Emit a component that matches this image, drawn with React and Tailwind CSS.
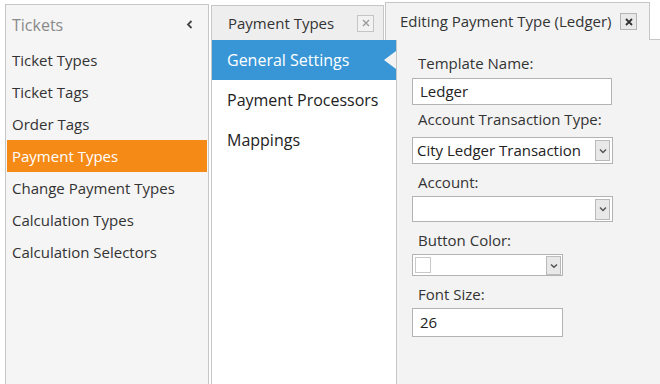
import { useState } from 'react'

const menu = [
  'Ticket Types',
  'Ticket Tags',
  'Order Tags',
  'Payment Types',
  'Change Payment Types',
  'Calculation Types',
  'Calculation Selectors',
]

const sections = ['General Settings', 'Payment Processors', 'Mappings']

function CloseBox({ dark }) {
  return (
    <span className={`flex items-center justify-center w-[17px] h-[17px] border ${dark ? 'border-[#b5b5b5] bg-[#e9e9e9] text-[#333]' : 'border-[#c4c4c4] bg-[#f2f2f2] text-[#9a9a9a]'}`}>
      <svg width="8" height="8" viewBox="0 0 8 8">
        <path d="M1 1L7 7M7 1L1 7" stroke="currentColor" strokeWidth={dark ? 1.8 : 1.4} />
      </svg>
    </span>
  )
}

function Arrow() {
  return (
    <span className="flex items-center justify-center w-[15px] h-[21px] border border-[#b9b9b9] bg-[#e8e8e8] text-[#555]">
      <svg width="8" height="6" viewBox="0 0 8 6">
        <path d="M1 1.5L4 4.5L7 1.5" fill="none" stroke="currentColor" strokeWidth="1.5" />
      </svg>
    </span>
  )
}

function Label({ children, className = '' }) {
  return <div className={`pl-[6px] h-[20px] leading-[20px] text-[15px] text-[#333] ${className}`}>{children}</div>
}

export default function App() {
  const [active, setActive] = useState('Payment Types')
  const [section, setSection] = useState('General Settings')

  return (
    <div className="flex w-[660px] h-[384px] overflow-hidden bg-white text-[#222]" style={{ fontFamily: '"Segoe UI", "Open Sans", sans-serif' }}>
      {/* left navigation */}
      <div className="ml-[5px] mt-[4px] w-[204px] flex flex-col border border-b-0 border-[#c6c6c6] bg-[#f5f5f5] px-[1px]">
        <div className="h-[39px] flex items-center justify-between pl-[5px] pr-[14px] text-[16px] text-[#8a8a8a]">
          <span>Tickets</span>
          <svg width="7" height="9" viewBox="0 0 7 9" className="text-[#444]">
            <path d="M5.5 1L2 4.5L5.5 8" fill="none" stroke="currentColor" strokeWidth="1.8" />
          </svg>
        </div>
        {menu.map(m => (
          <button
            key={m}
            onClick={() => setActive(m)}
            className={`h-[32px] pl-[5px] text-left text-[15px] ${active === m ? 'bg-[#f68a17] text-white' : 'text-[#333]'}`}
          >
            {m}
          </button>
        ))}
      </div>

      {/* document area */}
      <div className="ml-[2px] flex-1 flex flex-col">
        <div className="h-[40px] flex">
          <div className="mt-[5px] w-[173px] h-[35px] flex items-center pl-[16px] pr-[9px] border border-b-0 border-[#c6c6c6] bg-[#eeeeee] text-[15px] text-[#333]">
            <span>Payment Types</span>
            <span className="ml-auto"><CloseBox /></span>
          </div>
          <div className="ml-[1px] mt-[2px] w-[265px] h-[38px] flex items-center pl-[14px] pr-[12px] border border-b-0 border-[#c6c6c6] bg-[#f3f3f3] text-[15px] text-[#333]">
            <span>Editing Payment Type (Ledger)</span>
            <span className="ml-auto"><CloseBox dark /></span>
          </div>
          <div className="flex-1 border-b border-[#c6c6c6]" />
        </div>

        <div className="flex-1 flex">
          <div className="w-[186px] flex flex-col border-x border-[#c6c6c6] bg-white">
            {sections.map(s => (
              <button
                key={s}
                onClick={() => setSection(s)}
                className={`relative h-[40px] pl-[15px] text-left text-[16px] ${section === s ? 'bg-[#3896d6] text-white' : 'text-[#222]'}`}
              >
                {s}
                {section === s && (
                  <span className="absolute right-0 top-[11px] w-0 h-0 border-y-[9px] border-y-transparent border-r-[12px] border-r-[#f3f3f3]" />
                )}
              </button>
            ))}
          </div>

          <div className="flex-1 flex flex-col bg-[#f3f3f3] pl-[15px]">
            <Label className="mt-[13px]">Template Name:</Label>
            <div className="mt-[5px] w-[200px] h-[27px] flex items-center pl-[7px] border border-[#b3b3b3] bg-white text-[15px]">Ledger</div>

            <Label className="mt-[4px]">Account Transaction Type:</Label>
            <div className="mt-[8px] w-[201px] h-[27px] flex items-center justify-between pl-[4px] pr-[2px] border border-[#b3b3b3] bg-white text-[15px]">
              <span>City Ledger Transaction</span>
              <Arrow />
            </div>

            <Label className="mt-[8px]">Account:</Label>
            <div className="mt-[4px] w-[201px] h-[26px] flex items-center justify-end pr-[2px] border border-[#b3b3b3] bg-white">
              <Arrow />
            </div>

            <Label className="mt-[8px]">Button Color:</Label>
            <div className="mt-[4px] w-[151px] h-[22px] flex items-center justify-between pl-[2px] pr-[1px] border border-[#b3b3b3] bg-white">
              <span className="w-[16px] h-[16px] border border-[#c8c8c8] bg-white" />
              <span className="scale-y-[0.9]"><Arrow /></span>
            </div>

            <Label className="mt-[8px]">Font Size:</Label>
            <div className="mt-[4px] w-[151px] h-[29px] flex items-center pl-[7px] border border-[#b3b3b3] bg-white text-[15px]">26</div>
          </div>
        </div>
      </div>
    </div>
  )
}
